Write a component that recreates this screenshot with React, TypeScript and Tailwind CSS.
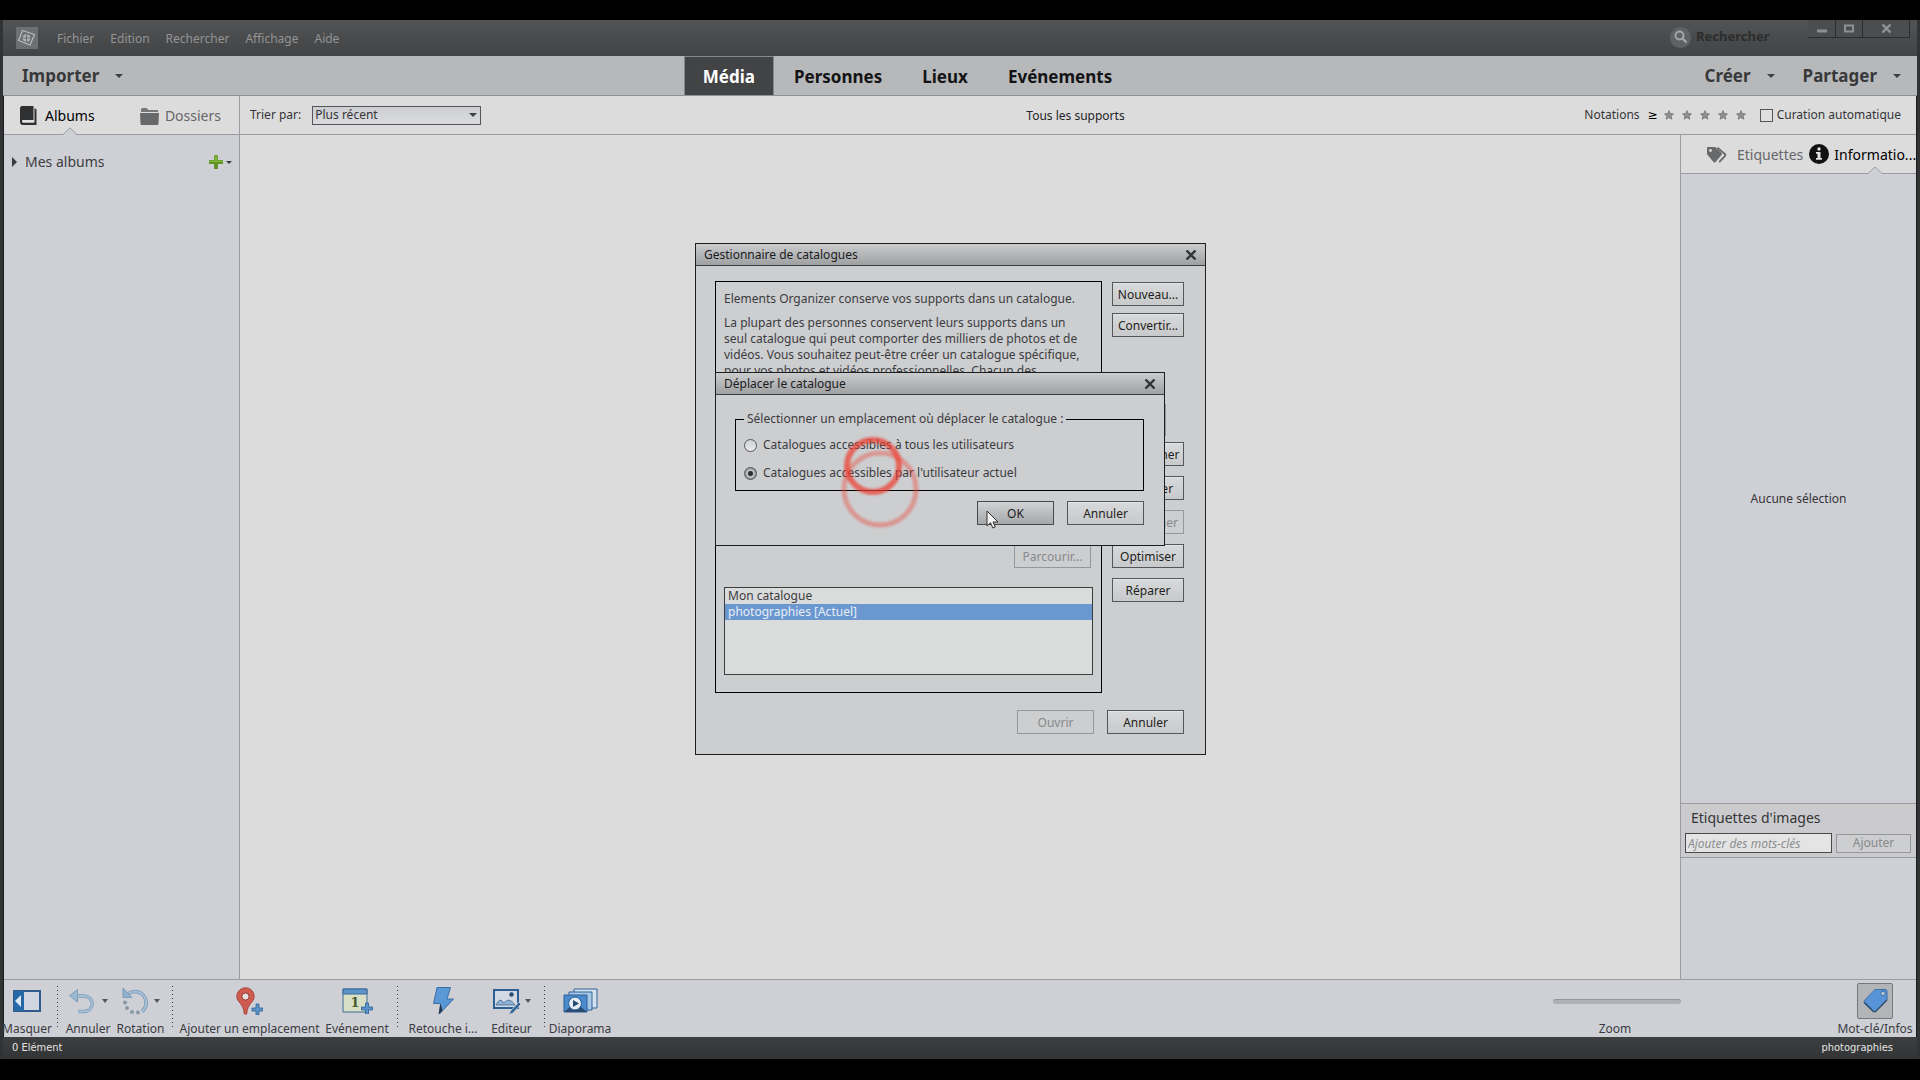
import React from "react";

const Caret = () => (
  <svg width="8" height="4" viewBox="0 0 8 4" className="shrink-0">
    <path d="M0 0h8L4 4z" fill="#3f4042" />
  </svg>
);

const CloseIcon = () => (
  <svg width="12" height="10" viewBox="0 0 12 10">
    <path d="M1.500.500l9 9M10.500.500l-9 9" stroke="#333436" strokeWidth="2.400" />
  </svg>
);

const Notch = () => (
  <svg width="16" height="8" viewBox="0 0 16 8" className="absolute -bottom-px left-1/2 -translate-x-1/2">
    <path d="M1 8L8 1l7 7z" fill="#cfd0d6" />
    <path d="M0 7.500h1L8 1l7 6.500h1" fill="none" stroke="#9b9ca1" />
  </svg>
);

const Star = () => (
  <svg width="10" height="10" viewBox="0 0 10 10">
    <path d="M5 .600l1.300 3 3.200.300-2.400 2.100.700 3.200L5 7.500 2.200 9.200l.700-3.200L.500 3.900l3.200-.300z" fill="#8e8f91" stroke="#6a6b6d" strokeWidth=".7" />
  </svg>
);

type PushButtonProps = { children: React.ReactNode; className?: string; disabled?: boolean };

const PushButton = ({ children, className = "w-[77px]", disabled }: PushButtonProps) => (
  <button
    disabled={disabled}
    className={`${className} flex h-6 shrink-0 items-center justify-center border border-[#55565a] bg-linear-to-b from-[#d8d9db] to-[#c8c9cb] pt-px whitespace-nowrap text-[#1d1e20] shadow-[inset_0_1px_0_#e4e5e7] disabled:border-[#96979a] disabled:bg-none disabled:text-[#88898c] disabled:shadow-none`}
  >
    {children}
  </button>
);

const TitleBar = ({ title }: { title: string }) => (
  <div className="flex h-[22px] items-center justify-between border-b border-[#3c3d3f] bg-linear-to-b from-[#cbccce] to-[#9fa0a2] px-2">
    <h2 className="pt-px text-[#1b1c1e]">{title}</h2>
    <button aria-label="Fermer">
      <CloseIcon />
    </button>
  </div>
);

const NavMenu = ({ label }: { label: string }) => (
  <button className="flex items-center gap-4 text-[17px] font-bold text-[#37383a]">
    {label}
    <Caret />
  </button>
);

const ModeTab = ({ label, active }: { label: string; active?: boolean }) => (
  <button
    className={
      active
        ? "h-full border-x border-t border-[#88898b] bg-[#424344] px-[18px] pt-0.5 text-white"
        : "h-full px-5 pt-[3px] text-[#131415]"
    }
  >
    {label}
  </button>
);

type ToolProps = { label: string; width: string; caret?: string; children: React.ReactNode };

const Tool = ({ label, width, caret, children }: ToolProps) => (
  <button className={`${width} flex flex-col items-center whitespace-nowrap`}>
    <span className={`${caret ?? ""} flex h-[41px] items-center pt-px`}>
      {children}
      {caret && (
        <svg width="6" height="4" viewBox="0 0 6 4">
          <path d="M0 0h6L3 4z" fill="#55565a" />
        </svg>
      )}
    </span>
    <span className="leading-4">{label}</span>
  </button>
);

const ToolDivider = () => (
  <div className="flex w-[10px] justify-center pt-1.5 pb-2.5">
    <div className="w-px bg-[repeating-linear-gradient(to_bottom,#3f4042_0_1px,transparent_1px_4px)]" />
  </div>
);

const MenuBar = () => (
  <header className="flex h-9 items-start justify-between bg-linear-to-b from-[#525354] to-[#424344] text-[#939496]">
    <div className="flex h-full items-center pl-[13px]">
      <svg width="22" height="22" viewBox="0 0 22 22">
        <rect width="22" height="22" fill="#6e6f70" />
        <path d="M6.500 3.500l12 4-4.500 10.500L2.500 13.500z" fill="none" stroke="#b9babb" strokeWidth="1.200" />
        <circle cx="10.500" cy="11" r="3.800" fill="#b2b3b4" />
        <path d="M10.500 7v8M6.500 11h8" stroke="#6e6f70" />
      </svg>
      <nav className="ml-[19px] flex gap-4 pt-0.5">
        <button>Fichier</button>
        <button>Edition</button>
        <button>Rechercher</button>
        <button>Affichage</button>
        <button>Aide</button>
      </nav>
    </div>
    <div className="flex h-full items-start">
      <label className="mr-4 flex h-[34px] items-center gap-[5px]">
        <svg width="21" height="21" viewBox="0 0 21 21">
          <circle cx="10.500" cy="10.500" r="10.500" fill="#606162" />
          <circle cx="9.500" cy="8.500" r="4" fill="none" stroke="#a3a4a5" strokeWidth="2" />
          <path d="M12.500 11.500l4 4" stroke="#a3a4a5" strokeWidth="2.400" />
        </svg>
        <input
          aria-label="Rechercher"
          placeholder="Rechercher"
          className="w-24 bg-transparent text-[13px] font-bold outline-none placeholder:text-[#2b2c2d]"
        />
      </label>
      <div className="mr-[7px] flex h-[18px] border-r border-b border-[#2c2d2e] bg-[#4c4d4e]">
        <button aria-label="Réduire" className="flex w-7 items-center justify-center border-r border-[#2c2d2e]">
          <svg width="10" height="10" viewBox="0 0 10 10"><path d="M0 5.500h10v3H0z" fill="#8e8f90" /></svg>
        </button>
        <button aria-label="Agrandir" className="flex w-[27px] items-center justify-center border-r border-[#2c2d2e]">
          <svg width="10" height="9" viewBox="0 0 10 9"><path d="M1 1.500h8v6H1z" fill="none" stroke="#8e8f90" strokeWidth="2" /></svg>
        </button>
        <button aria-label="Fermer" className="flex w-[46px] items-center justify-center">
          <svg width="11" height="9" viewBox="0 0 11 9"><path d="M1.500.500l8 8M9.500.500l-8 8" stroke="#929394" strokeWidth="2.400" /></svg>
        </button>
      </div>
    </div>
  </header>
);

const ModeBar = () => (
  <div className="grid h-10 grid-cols-[1fr_auto_1fr] items-center border-b border-[#8f9092] bg-[#b7b8ba]">
    <div className="pt-px pl-[19px]">
      <NavMenu label="Importer" />
    </div>
    <nav className="mr-[104px] flex h-full text-[17px] font-bold">
      <ModeTab label="Média" active />
      <ModeTab label="Personnes" />
      <ModeTab label="Lieux" />
      <ModeTab label="Evénements" />
    </nav>
    <div className="flex justify-end gap-7 pt-px pr-4">
      <NavMenu label="Créer" />
      <NavMenu label="Partager" />
    </div>
  </div>
);

const Sidebar = () => (
  <aside className="flex w-[236px] shrink-0 flex-col border-r border-[#9b9ca1] bg-[#cfd0d6] text-sm">
    <div className="flex h-[39px] justify-between border-b border-[#9b9ca1] bg-[#dcdcdc] pr-[18px] pl-4">
      <button className="flex items-center gap-2 text-black">
        <svg width="17" height="19" viewBox="0 0 17 19">
          <path d="M2 0h11.500v14H3c-1.200 0-1.200 2.500 0 2.500h11.500V2l2 1.500V19H2.500C1 19 0 17.500 0 16V2c0-1 1-2 2-2z" fill="#2f3031" />
          <path d="M3 14h10.500v2.500H3c-1.200 0-1.200-2.500 0-2.500z" fill="#e2e2e2" />
        </svg>
        <span className="relative flex h-full items-center pt-0.5">
          Albums
          <Notch />
        </span>
      </button>
      <button className="flex items-center gap-1.5 pt-0.5 text-[#66676a]">
        <svg width="19" height="17" viewBox="0 0 19 17">
          <path d="M1 1.500Q1 0 2.500 0h4L8.500 2H18v2H1z" fill="#77787a" />
          <path d="M0 5h19l-.500 11q0 1-1 1h-16q-1 0-1-1z" fill="#68696b" />
        </svg>
        Dossiers
      </button>
    </div>
    <div className="flex h-[54px] items-center pr-[7px] pl-2 text-[#3c3d40]">
      <button className="flex items-center gap-2">
        <svg width="5" height="10" viewBox="0 0 5 10"><path d="M0 0l5 5-5 5z" fill="#3c3d40" /></svg>
        Mes albums
      </button>
      <button aria-label="Ajouter un album" className="ml-auto flex items-center gap-[3px]">
        <svg width="14" height="14" viewBox="0 0 14 14">
          <path d="M5 0h4v5h5v4H9v5H5V9H0V5h5z" fill="#5f9526" />
          <path d="M5.500.500h3v5h5v1.500h-13V5.500h5z" fill="#7fb33b" />
        </svg>
        <svg width="6" height="3" viewBox="0 0 6 3"><path d="M0 0h6L3 3z" fill="#3c3d40" /></svg>
      </button>
    </div>
  </aside>
);

const FilterBar = () => (
  <div className="grid h-[39px] grid-cols-[1fr_auto_1fr] items-center border-b border-[#9b9ca1] pr-[15px] pl-[10px] text-[#343537]">
    <div className="flex items-center gap-[11px]">
      <label htmlFor="sort">Trier par:</label>
      <div className="relative">
        <select
          id="sort"
          className="block h-[19px] w-[169px] appearance-none border border-[#55565a] bg-linear-to-b from-[#cdced2] to-[#dadbde] pl-0.5 leading-4 outline-none"
        >
          <option>Plus récent</option>
        </select>
        <div className="pointer-events-none absolute top-[7px] right-1">
          <Caret />
        </div>
      </div>
    </div>
    <p className="pt-px text-[#232425]">Tous les supports</p>
    <div className="flex items-center justify-end">
      <span>Notations</span>
      <button className="mr-1.5 ml-2 text-black">≥</button>
      <div className="flex gap-2">
        {[1, 2, 3, 4, 5].map((n) => (
          <button key={n} aria-label={`${n} étoiles`}>
            <Star />
          </button>
        ))}
      </div>
      <label className="ml-3.5 flex items-center gap-1">
        <input type="checkbox" className="size-[13px] appearance-none border border-[#55565a] bg-[#dfdfdf]" />
        Curation automatique
      </label>
    </div>
  </div>
);

const InfoPanel = () => (
  <aside className="flex w-[236px] shrink-0 flex-col border-l border-[#9b9ca1] bg-[#cfd0d6] text-[#343537]">
    <div className="flex h-[39px] items-center border-b border-[#9b9ca1] bg-[#dcdcdc] pl-[26px] text-sm whitespace-nowrap">
      <button className="flex items-center gap-2.5 pt-0.5 text-[#66676a]">
        <svg width="20" height="16" viewBox="0 0 20 16">
          <path d="M1 0h6.500q1 0 1.700.700l5.300 5.300q1 1 0 2l-6 7q-1 1-2 0L.700 8Q0 7.300 0 6.500V1q0-1 1-1z" fill="#68696b" />
          <circle cx="3.500" cy="3.500" r="1.400" fill="#dcdcdc" />
          <path d="M10.500.800l7.300 6.200q1 1 0 2.200l-5.600 6" fill="none" stroke="#68696b" strokeWidth="1.800" />
        </svg>
        Etiquettes
      </button>
      <button className="ml-1.5 flex h-full items-center gap-[5px] text-black">
        <svg width="20" height="20" viewBox="0 0 20 20">
          <circle cx="10" cy="10" r="10" fill="#111" />
          <circle cx="10" cy="5" r="1.700" fill="#e2e2e2" />
          <path d="M7 8h4.500v6H13v1.800H7V14h1.500V9.800H7z" fill="#e2e2e2" />
        </svg>
        <span className="relative flex h-full items-center pt-0.5">
          Informatio...
          <Notch />
        </span>
      </button>
    </div>
    <div className="flex flex-1 items-center justify-center pt-5">Aucune sélection</div>
    <div className="h-[55px] border-y border-[#9b9ca1] bg-[#cbcbcd] pr-[5px] pl-1">
      <label htmlFor="keywords" className="flex h-[29px] items-center pb-0.5 pl-1.5 text-sm">
        Etiquettes d'images
      </label>
      <div className="flex items-center gap-1">
        <input
          id="keywords"
          placeholder="Ajouter des mots-clés"
          className="h-5 w-0 flex-1 border border-[#48494b] bg-[#e4e4e4] px-0.5 italic outline-none placeholder:text-[#8d8e90]"
        />
        <button disabled className="h-[19px] w-[75px] border border-[#96979a] bg-[#cdced0] leading-4 text-[#88898c]">
          Ajouter
        </button>
      </div>
    </div>
    <div className="h-[121px]" />
  </aside>
);

const Taskbar = () => (
  <div className="flex h-[58px] border-t border-[#9b9ca1] bg-[#cfd0d6] text-[#3b3c3f]">
    <Tool label="Masquer" width="mr-0.5 w-[46px]">
      <svg width="28" height="22" viewBox="0 0 28 22">
        <path d="M1 1h26v20H1z" fill="#cfd6e0" stroke="#2f5c8c" strokeWidth="2" />
        <path d="M1 1h10v20H1z" fill="#2468a8" />
        <path d="M8 5v12l-6-6z" fill="#dbe7f2" />
      </svg>
    </Tool>
    <ToolDivider />
    <Tool label="Annuler" width="w-[52px]" caret="gap-2">
      <svg width="25" height="25" viewBox="0 0 25 25">
        <path d="M7 7h8a8 7.500 0 010 15.500h-6" fill="none" stroke="#7f9db9" strokeWidth="3.400" />
        <path d="M7 7h8a8 7.500 0 010 15.500h-6" fill="none" stroke="#a5bfd6" strokeWidth="1.800" />
        <path d="M8.500.500v12.500L.500 6.700z" fill="#9bb8d2" stroke="#7f9db9" />
      </svg>
    </Tool>
    <Tool label="Rotation" width="w-[53px]" caret="gap-1">
      <svg width="28" height="28" viewBox="0 0 28 28">
        <path d="M6 7A10.500 10.500 0 1120 24.500" fill="none" stroke="#7f9db9" strokeWidth="3.600" />
        <path d="M6 7A10.500 10.500 0 1120 24.500" fill="none" stroke="#a5bfd6" strokeWidth="2" />
        <path d="M1 1v9.500h9z" fill="#8fb0cf" stroke="#7f9db9" />
        <circle cx="3" cy="15.500" r="2" fill="#8a98a6" />
        <circle cx="5" cy="21" r="2" fill="#8a98a6" />
        <circle cx="10" cy="25" r="2" fill="#8a98a6" />
        <circle cx="16" cy="25.500" r="2" fill="#8a98a6" />
      </svg>
    </Tool>
    <ToolDivider />
    <Tool label="Ajouter un emplacement" width="w-[145px]">
      <svg width="27" height="28" viewBox="0 0 27 28">
        <path d="M9.500.700a8.700 8.700 0 018.700 8.700c0 6-7 7-7.500 17.600H8.300C7.800 16.400.800 15.400.800 9.400A8.700 8.700 0 019.500.700z" fill="#cf5a50" stroke="#a8463f" />
        <circle cx="9.500" cy="9.500" r="3.600" fill="#e6e0df" stroke="#8f3a35" />
        <path d="M20 17h3v4h4v3h-4v4h-3v-4h-4v-3h4z" fill="#5c93cb" stroke="#2b5f96" strokeWidth=".8" />
      </svg>
    </Tool>
    <Tool label="Evénement" width="w-[70px]">
      <svg width="31" height="26" viewBox="0 0 31 26">
        <path d="M1 1h24v23H1z" fill="#d7dfc4" stroke="#3f6a96" />
        <path d="M1 1h24v5H1z" fill="#5c93cb" stroke="#3f6a96" />
        <text x="13" y="19" textAnchor="middle" fontSize="13" fontWeight="700" fontFamily="DejaVu Serif, serif" fill="#4a5a2b">1</text>
        <path d="M23.500 15h3v4h4v3h-4v4h-3v-4h-4v-3h4z" fill="#5c93cb" stroke="#2b5f96" strokeWidth=".8" />
      </svg>
    </Tool>
    <ToolDivider />
    <Tool label="Retouche i..." width="w-[82px]">
      <svg width="21" height="28" viewBox="0 0 21 28">
        <path d="M4 .500h13.500L14 12h6.500L6.500 27l1-10.500H.500z" fill="#5a97d6" stroke="#3d6ea3" />
        <path d="M5.500 27.500l2-11 2 7z" fill="#26364a" />
      </svg>
    </Tool>
    <Tool label="Editeur" width="w-[55px]" caret="gap-1">
      <svg width="28" height="28" viewBox="0 0 28 28">
        <path d="M1 3h24v18H1z" fill="#d3dae3" stroke="#2b5f96" strokeWidth="2" />
        <path d="M3 18c3-6 5-6 8-2 3-4 7-4 11 2z" fill="#8db0d3" stroke="#3f6a96" strokeWidth=".8" />
        <circle cx="18.500" cy="7.500" r="2.200" fill="#254b74" />
        <path d="M26 15l2 2-8 9-4 1.500L17.500 24z" fill="#2f6299" stroke="#cfd0d6" strokeWidth=".8" />
      </svg>
    </Tool>
    <ToolDivider />
    <Tool label="Diaporama" width="w-[62px]">
      <svg width="35" height="26" viewBox="0 0 35 26">
        <path d="M11 1h23v19H11z" fill="#d5e2ee" stroke="#2f6299" />
        <path d="M6 4h23v18H6z" fill="#a9c8e6" stroke="#2f6299" />
        <path d="M1 7h23v17H1z" fill="#4b8acb" stroke="#2b5f96" />
        <path d="M1 24l6-5h11l6 5z" fill="#2b4c72" />
        <circle cx="12" cy="15.500" r="6.400" fill="#e6edf4" stroke="#2b5f96" />
        <path d="M10 12l6 3.500-6 3.500z" fill="#254b74" />
      </svg>
    </Tool>
    <div className="ml-auto flex w-[128px] flex-col items-center">
      <span className="flex h-[41px] items-center pt-px">
        <input
          id="zoom"
          type="range"
          disabled
          className="h-[5px] w-[128px] appearance-none rounded-full border-t border-[#96979b] bg-[#b0b1b5] [&::-webkit-slider-thumb]:appearance-none"
        />
      </span>
      <label htmlFor="zoom" className="pr-1 leading-4">Zoom</label>
    </div>
    <button className="mr-[5px] ml-[158px] flex w-[72px] flex-col items-center whitespace-nowrap">
      <span className="flex h-[41px] items-center">
        <span className="flex size-9 items-center justify-center rounded-xs border border-[#77787b] bg-[#b3b4b7]">
          <svg width="25" height="25" viewBox="0 0 25 25">
            <path d="M12 1.500h10q2 0 2 2V12L13 23.500q-1.500 1-3 0L1.500 15.500q-1-1.500 0-3z" fill="#5795d8" stroke="#3b6fa6" />
            <path d="M1.500 14.500l9 9h2L24 12" fill="none" stroke="#31465e" strokeWidth="1.200" />
            <circle cx="20" cy="5.500" r="2.300" fill="#b9c4cf" stroke="#3b6fa6" />
          </svg>
        </span>
      </span>
      <span className="leading-4">Mot-clé/Infos</span>
    </button>
  </div>
);

const MoveDialog = () => (
  <section
    role="dialog"
    aria-label="Déplacer le catalogue"
    className="absolute top-[128px] left-[19px] h-[174px] w-[450px] border border-[#1d1e20] bg-[#cdced0]"
  >
    <TitleBar title="Déplacer le catalogue" />
    <div className="pt-4 pr-5 pl-[19px]">
      <fieldset className="flex h-20 flex-col border border-black pl-2">
        <legend className="px-[3px]">Sélectionner un emplacement où déplacer le catalogue :</legend>
        <label className="mt-[10px] flex items-center gap-1.5">
          <input
            type="radio"
            name="location"
            className="size-[13px] appearance-none rounded-full border border-[#55565a] bg-linear-to-b from-[#cfd0d2] to-[#ececec]"
          />
          Catalogues accessibles à tous les utilisateurs
        </label>
        <label className="mt-3 flex items-center gap-1.5">
          <input
            type="radio"
            name="location"
            defaultChecked
            className="size-[13px] appearance-none rounded-full border border-[#55565a] bg-[radial-gradient(circle,#2e2f31_0_2px,#b9babc_3px_4px,#77787a_6px)]"
          />
          Catalogues accessibles par l'utilisateur actuel
        </label>
      </fieldset>
      <div className="mt-[10px] flex justify-end gap-[13px]">
        <button className="h-6 w-[77px] border border-[#48494c] bg-linear-to-b from-[#d2d3d5] to-[#a6a7a9] pt-px text-[#1d1e20]">
          OK
        </button>
        <PushButton>Annuler</PushButton>
      </div>
    </div>
  </section>
);

const CatalogManager = () => (
  <section
    role="dialog"
    aria-label="Gestionnaire de catalogues"
    className="absolute top-[243px] left-[695px] flex h-[512px] w-[511px] flex-col border border-[#1d1e20] bg-[#cdced0] text-[#3b3c3f]"
  >
    <TitleBar title="Gestionnaire de catalogues" />
    <div className="flex gap-[10px] pt-[15px] pr-[21px] pl-[19px]">
      <div className="flex h-[412px] flex-1 flex-col border border-black px-2 pt-[9px] pb-[17px] leading-4">
        <p>Elements Organizer conserve vos supports dans un catalogue.</p>
        <p className="mt-2 pr-1.5">
          La plupart des personnes conservent leurs supports dans un seul catalogue qui peut comporter des
          milliers de photos et de vidéos. Vous souhaitez peut-être créer un catalogue spécifique, pour vos
          photos et vidéos professionnelles. Chacun des
        </p>
        <div className="mt-auto mr-0.5 flex justify-end">
          <PushButton disabled>Parcourir...</PushButton>
        </div>
        <ul role="listbox" className="mt-[19px] h-[88px] border border-[#3c3d3f] bg-[#dadbdb]">
          <li role="option" aria-selected="false" className="px-[3px]">Mon catalogue</li>
          <li role="option" aria-selected="true" className="bg-[#6a97d0] px-[3px] text-[#e8eef6]">
            photographies [Actuel]
          </li>
        </ul>
      </div>
      <div className="flex w-[72px] flex-col pt-px">
        <PushButton className="w-full">Nouveau...</PushButton>
        <PushButton className="mt-[7px] w-full">Convertir...</PushButton>
        <div className="mt-[67px] mb-1.5 h-8 w-[54px] border border-[#96979a]" />
        <div className="flex flex-col gap-[10px]">
          <PushButton className="w-full">Renommer</PushButton>
          <PushButton className="w-full">Déplacer</PushButton>
          <PushButton className="w-full" disabled>Supprimer</PushButton>
          <PushButton className="w-full">Optimiser</PushButton>
          <PushButton className="w-full">Réparer</PushButton>
        </div>
      </div>
    </div>
    <div className="mt-[17px] flex justify-end gap-[13px] pr-[21px]">
      <PushButton disabled>Ouvrir</PushButton>
      <PushButton>Annuler</PushButton>
    </div>
    <MoveDialog />
    {/* click ripples and pointer */}
    <svg width="90" height="110" viewBox="0 0 90 110" className="pointer-events-none absolute top-[188px] left-[138px] blur-[1px]">
      <circle cx="39" cy="34" r="26" fill="none" stroke="#ee3b2c" strokeWidth="6" opacity=".7" />
      <circle cx="46" cy="57" r="36" fill="none" stroke="#ee4436" strokeWidth="5" opacity=".4" />
    </svg>
    <svg width="13" height="19" viewBox="0 0 13 19" className="pointer-events-none absolute top-[266px] left-[290px]">
      <path d="M1 1v15l3.500-3.300L6.800 18l2.500-1-2.300-5H12z" fill="#f2f2f2" stroke="#333" />
    </svg>
  </section>
);

export default function App() {
  return (
    <div className="relative flex min-h-screen flex-col bg-black pt-5 pb-[21px] font-['Noto_Sans','DejaVu_Sans',sans-serif] text-xs">
      <div className="flex flex-1 flex-col border-x-[3px] border-[#323334]">
        <MenuBar />
        <ModeBar />
        <div className="flex flex-1 flex-col border-x border-[#1a1b1c]">
          <main className="flex flex-1 bg-[#dcdcdc]">
            <Sidebar />
            <div className="flex min-w-0 flex-1 flex-col">
              <FilterBar />
              <div className="flex flex-1">
                <div className="flex-1" />
                <InfoPanel />
              </div>
            </div>
          </main>
          <Taskbar />
        </div>
        <footer className="flex h-[22px] items-center justify-between bg-linear-to-b from-[#3d3e3f] to-[#333435] pt-px pr-6 pl-[9px] font-['DejaVu_Sans_Condensed','DejaVu_Sans',sans-serif] text-[11px] text-[#e4e4e4]">
          <span>0 Elément</span>
          <span>photographies</span>
        </footer>
      </div>
      <CatalogManager />
    </div>
  );
}
